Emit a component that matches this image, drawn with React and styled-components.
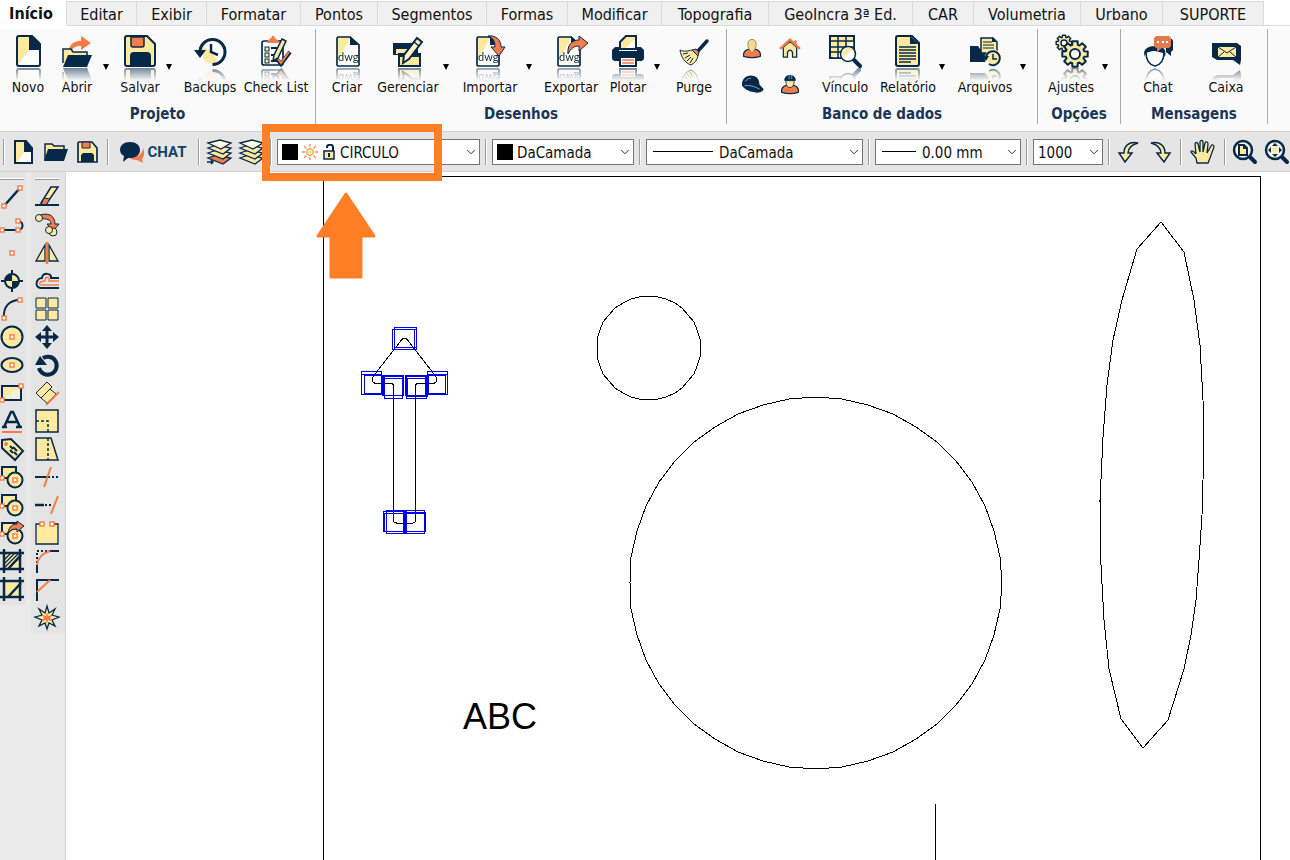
import { ChevronDown } from "lucide-react";
import styled, { createGlobalStyle, css } from "styled-components";

const NAVY = "#06294a";
const CREAM = "#fde9a0";
const ORANGE = "#f47c48";

/* ---------- ribbon icons (32 x 32) ---------- */

const dwgPage = (
  <>
    <path d="M5 1h14l8 9v21H5z" fill="#fffdf5" />
    <path d="M5 1h14L7 24H5z" fill={CREAM} />
    <path d="M18 1l9 9h-9z" fill={NAVY} />
    <path
      d="M6 2h12l9 8v19a1.5 1.5 0 0 1-1 2H6a1.5 1.5 0 0 1-1-2V3z"
      fill="none"
      stroke={NAVY}
      strokeWidth="1.7"
    />
    <text x="6" y="26" fontSize="11" fontFamily="Lato, sans-serif" fill={NAVY}>
      dwg
    </text>
  </>
);

// outline of a cog wheel with eight teeth
const cog = (cx, cy, outer, inner) => {
  const points = [];
  for (let i = 0; i < 8; i++) {
    [
      [-0.3, inner],
      [-0.2, outer],
      [0.2, outer],
      [0.3, inner],
    ].forEach(([shift, r]) => {
      const a = (i * Math.PI) / 4 + shift;
      points.push(`${(cx + r * Math.cos(a)).toFixed(1)},${(cy + r * Math.sin(a)).toFixed(1)}`);
    });
  }
  return points.join(" ");
};

const icons = {
  novo: (
    <>
      <path d="M5 1h23v30H5z" fill={CREAM} />
      <path d="M28 14v17H5L18 14z" fill="#fff" />
      <path d="M17 1h3l8 8v6H17z" fill={NAVY} />
      <path
        d="M7 1h13l8 8v20q0 2-2 2H7q-2 0-2-2V3q0-2 2-2z"
        fill="none"
        stroke={NAVY}
        strokeWidth="2"
      />
      <path d="M22 0h7v8z" fill="#fafafa" />
    </>
  ),
  abrir: (
    <>
      <path
        d="M8 15c1-7 6-9 12-9V1l10 7-10 7v-4c-5 0-7 1-9 4z"
        fill={ORANGE}
      />
      <path d="M2 28V14h8l2 3h14v6" fill={CREAM} stroke={NAVY} strokeWidth="1.5" />
      <path d="M7 20h24l-5 12H2z" fill={NAVY} />
    </>
  ),
  salvar: (
    <>
      <path
        d="M3 1h20l8 8v20q0 2-2 2H3q-2 0-2-2V3q0-2 2-2z"
        fill={CREAM}
        stroke={NAVY}
        strokeWidth="2"
      />
      <path d="M7 2v8q0 2 2 2h9q2 0 2-2V2z" fill={ORANGE} stroke={NAVY} strokeWidth="1.5" />
      <path d="M6 31V21q0-4 4-4h13q4 0 4 4v10z" fill={NAVY} />
    </>
  ),
  backups: (
    <>
      <circle cx="18" cy="17" r="11" fill="#fff" />
      <path d="M7 10L18 17l6 10c-5 3-13 2-15-4z" fill={CREAM} />
      <path
        d="M6 17a12.5 12.5 0 1 1 12.5 12.5"
        fill="none"
        stroke={NAVY}
        strokeWidth="3"
      />
      <path d="M0 15h12l-6 8z" fill={NAVY} />
      <path d="M17 9v8l7 3" fill="none" stroke={NAVY} strokeWidth="2.5" />
    </>
  ),
  checklist: (
    <>
      <rect x="2" y="6" width="21" height="24" rx="2" fill="#fff" stroke={NAVY} strokeWidth="1.7" />
      <path d="M7 8c0-4 4-3 5-7h2c1 4 5 3 5 7z" fill={ORANGE} />
      <rect x="5" y="12" width="4" height="4" fill={CREAM} stroke={NAVY} />
      <rect x="5" y="18" width="4" height="4" fill={CREAM} stroke={NAVY} />
      <rect x="5" y="24" width="4" height="4" fill={CREAM} stroke={NAVY} />
      <path d="M11 13h6M11 20h4M11 26h7" stroke={NAVY} strokeWidth="2" />
      <path d="M22 4l4 2-8 17-5 3 1-6z" fill={CREAM} stroke={NAVY} strokeWidth="1.5" />
      <path d="M17 24l4 5 9-12" fill="none" stroke={NAVY} strokeWidth="4" />
      <path d="M18 24l3 4 8-11" fill="none" stroke={ORANGE} strokeWidth="2" />
    </>
  ),
  criar: <g transform="translate(1 0)">{dwgPage}</g>,
  gerenciar: (
    <>
      <path d="M1 8h25v12H1z" fill={NAVY} />
      <path d="M4 14h13l-5 5H4z" fill={CREAM} />
      <path d="M7 19h21v12H7z" fill={CREAM} stroke={NAVY} strokeWidth="2" />
      <path d="M7 19h21v3H7z" fill={NAVY} />
      <path d="M25 3l5 4-13 17-6 4 1-8z" fill="#fff3c4" stroke={NAVY} strokeWidth="2" />
      <path d="M22 7l5 4" stroke={NAVY} strokeWidth="1.5" />
    </>
  ),
  importar: (
    <>
      <g transform="translate(-2 0)">{dwgPage}</g>
      <path
        d="M14 1c8-1 13 4 13 11h4l-6 9-8-9h4c0-6-2-9-7-11z"
        fill={ORANGE}
        stroke={NAVY}
      />
    </>
  ),
  exportar: (
    <>
      <g transform="translate(-2 0)">{dwgPage}</g>
      <path
        d="M13 19c-1-9 4-14 11-14V1l9 7-9 8v-5c-5 0-8 2-11 8z"
        fill={ORANGE}
        stroke={NAVY}
      />
    </>
  ),
  plotar: (
    <>
      <path d="M8 14V7l6-6h10v13z" fill={CREAM} stroke={NAVY} strokeWidth="2" />
      <path d="M14 13l9-9v9z" fill="#fff" />
      <path d="M3 12h4v4h18v-4h4l3 3v9l-2 2H2l-2-2v-9z" fill={NAVY} />
      <path d="M8 22h16v9H8z" fill="#fff" stroke={NAVY} strokeWidth="2" />
      <path d="M10 25h12M10 28h12" stroke={ORANGE} strokeWidth="1.5" />
    </>
  ),
  purge: (
    <>
      <path d="M29 6L20 16" stroke={NAVY} strokeWidth="3.5" strokeLinecap="round" />
      <path
        d="M2 15c4 2 8 1 12 0l6 6c-1 4-3 7-7 9C7 28 3 22 2 15z"
        fill={CREAM}
        stroke={NAVY}
      />
      <path d="M5 19l5-1M7 23l5-3M9 26l4-4M12 28l3-5" stroke={NAVY} />
      <path d="M14 15l4-1 3 3-1 4z" fill={ORANGE} stroke={NAVY} />
    </>
  ),
  vinculo: (
    <>
      <path d="M1 1h24v22H1z" fill={CREAM} stroke={NAVY} strokeWidth="2" />
      <path d="M25 5v18H3z" fill="#fffbe9" />
      <path
        d="M1 1h24v22H1zM1 6h24M1 12h24M1 17h24M9 1v22M17 1v22"
        fill="none"
        stroke={NAVY}
        strokeWidth="1.5"
      />
      <path d="M25 25l6 6" stroke={NAVY} strokeWidth="4" strokeLinecap="round" />
      <circle cx="19" cy="19" r="7.5" fill="#fff" stroke={NAVY} strokeWidth="1.5" />
      <path d="M14 23a7 7 0 0 1 10-9z" fill={CREAM} />
    </>
  ),
  relatorio: (
    <>
      <path d="M6 1h14l7 7v21q0 2-2 2H6q-2 0-2-2V3q0-2 2-2z" fill={CREAM} stroke={NAVY} strokeWidth="2" />
      <path d="M18 1l9 8h-9z" fill={NAVY} />
      <path d="M7 12h17M7 15h17M7 18h17M7 21h17M7 24h17M7 27h12" stroke={NAVY} strokeWidth="1.3" />
    </>
  ),
  arquivos: (
    <>
      <path d="M1 11h8l2 3h10v13H1z" fill={NAVY} />
      <path d="M12 3h12l4 4v11H12z" fill={CREAM} stroke={NAVY} strokeWidth="1.5" />
      <path d="M14 7h9M14 10h11M14 13h11" stroke={NAVY} />
      <path d="M23 2l5 5h-5z" fill={NAVY} />
      <circle cx="24" cy="23" r="8.5" fill="#fff" />
      <path d="M17 22a7 7 0 1 1 3 7" fill={CREAM} stroke={NAVY} strokeWidth="2" />
      <path d="M13 21h7l-3 5z" fill={NAVY} />
      <path d="M24 19v5h4" fill="none" stroke={NAVY} strokeWidth="1.5" />
    </>
  ),
  ajustes: (
    <g stroke={NAVY} strokeLinejoin="round">
      <polygon points={cog(9, 8, 8, 6)} fill={CREAM} strokeWidth="1.5" />
      <circle cx="9" cy="8" r="3" fill="#fff" strokeWidth="1.5" />
      <polygon points={cog(20, 19, 13, 9.5)} fill={CREAM} strokeWidth="2" />
      <circle cx="20" cy="19" r="5" fill="#fff" strokeWidth="2" />
    </g>
  ),
  chat: (
    <>
      <path d="M23 4h7l1 2v9l-2 2v4l-5-4z" fill={NAVY} />
      <path d="M4 17c0 9 4 13 9 14 5-1 9-5 9-14l-8-3z" fill="#fff" stroke={NAVY} strokeWidth="1.5" />
      <path d="M3 22c0-5 3-6 10-6l8 2 2 4c2-8-2-11-10-11S0 15 3 22z" fill={NAVY} />
      <path d="M14 1h13l2 2v8l-2 2h-7l-5 4v-4h-1l-2-2V3z" fill="#e17b4d" />
      <path d="M15 7h2M20 7h2M24 7h2" stroke="#fff" strokeWidth="2" />
    </>
  ),
  caixa: (
    <>
      <path d="M2 8h25l4 3v14l-1 5-7-5H7l-5-3z" fill={NAVY} />
      <path d="M8 12h18v10H8z" fill={CREAM} />
      <path d="M8 12l9 6 9-6M8 22l6-5M26 22l-6-5" fill="none" stroke={NAVY} />
    </>
  ),
};

/* ---------- small icons of the data group (24 x 24) ---------- */

const smallIcons = {
  pessoa: (
    <>
      <path d="M2 22c-1-7 4-9 10-9s11 2 10 9q-10 3-20 0z" fill={ORANGE} stroke={NAVY} strokeWidth="1.5" />
      <path d="M7 7c0-7 10-7 10 0 0 4-1 6-3 8v2h-4v-2c-2-2-3-4-3-8z" fill="#f5d98b" stroke="#8a7a55" />
    </>
  ),
  casa: (
    <>
      <path d="M17 3h3v5h-3z" fill={ORANGE} />
      <path d="M4 11l8-7 8 7v12h-5v-6q-3-5-6 0v6H4z" fill={CREAM} stroke={NAVY} strokeWidth="1.5" />
      <path d="M0 13L12 2l12 11" fill="none" stroke={ORANGE} strokeWidth="3" />
    </>
  ),
  capacete: (
    <>
      <path d="M0 14C-1 6 6 1 12 2c6 0 9 5 9 11l5 5c-1 4-7 5-11 4C8 21 3 18 0 14z" fill={NAVY} />
      <path d="M3 14c6-1 12 1 18 4M4 9c2-3 4-4 7-4" fill="none" stroke="#9fb4c7" />
    </>
  ),
  operario: (
    <>
      <path d="M2 22c-1-7 4-9 10-9s11 2 10 9q-10 3-20 0z" fill={ORANGE} stroke={NAVY} strokeWidth="1.5" />
      <path d="M7 8h10c0 4-1 6-3 8h-4c-2-2-3-4-3-8z" fill={CREAM} stroke={NAVY} />
      <path d="M5 8c0-9 14-9 14 0z" fill={NAVY} />
      <path d="M11 1v5M14 1v5" stroke="#9fb4c7" />
    </>
  ),
};

/* ---------- tool bar and palette icons (24 x 24) ---------- */

const Knot = ({ x, y }) => (
  <rect x={x - 2} y={y - 2} width="4" height="4" fill="#fff" stroke={ORANGE} strokeWidth="1.4" />
);

const line = { fill: "none", stroke: NAVY, strokeWidth: 2 };

const Layers = ({ last }) => (
  <g stroke={NAVY} strokeWidth="1.3">
    <path d="M1 18l9-3 14 3-8 6z" fill={last} />
    <path d="M1 13l9-3 14 3-8 6z" fill={CREAM} />
    <path d="M1 8l9-3 14 3-8 6z" fill={CREAM} />
    <path d="M1 3l12-3 11 3-10 6z" fill="#fffbe4" />
  </g>
);

const Blocks = () => (
  <>
    <path d="M2 2h14v11H2z" fill={CREAM} stroke={NAVY} strokeWidth="2" />
    <circle cx="15" cy="15" r="7.5" fill={CREAM} stroke={NAVY} strokeWidth="2" />
    <Knot x={15} y={15} />
    <Knot x={2} y={13} />
  </>
);

const Hatch = ({ children }) => (
  <>
    <path d="M3 3h18v18H3z" fill={CREAM} />
    {children}
    <path d="M4 0v24M20 0v24M0 4h24M0 20h24" {...line} strokeWidth="2.5" />
    <path d="M21 6L8 20" {...line} strokeWidth="2.5" />
  </>
);

const tools = {
  novo: (
    <>
      <path d="M3 1h11l6 7v15H3z" fill={CREAM} />
      <path d="M20 11v12H5l8-12z" fill="#fff" />
      <path d="M12 1h2l6 7v4h-8z" fill={NAVY} />
      <path d="M3 1h11l6 7v15H3z" {...line} />
    </>
  ),
  abrir: (
    <>
      <path d="M1 20V4h7l2 2h10v5" fill={CREAM} stroke={NAVY} strokeWidth="1.5" />
      <path d="M4 9h20l-4 12H0z" fill={NAVY} />
    </>
  ),
  salvar: (
    <>
      <path d="M3 2h13l5 6v14H2V3z" fill={CREAM} stroke={NAVY} strokeWidth="1.7" />
      <path d="M6 2h8v6H6z" fill={ORANGE} stroke={NAVY} />
      <path d="M5 22v-7l2-2h9l2 2v7z" fill={NAVY} />
    </>
  ),
  conversa: (
    <>
      <path d="M23 8c2 5 1 9-1 11l1 4-6-3c-4 0-7-1-8-3 8 1 13-2 14-9z" fill={ORANGE} />
      <path d="M10 2c6 0 10 3 10 8s-4 8-10 8l-2 0-5 4 1-6c-2-1-4-3-4-6 0-5 4-8 10-8z" fill={NAVY} />
    </>
  ),
  camadaAtual: (
    <>
      <Layers last={ORANGE} />
      <path d="M0 22h6M4 20l2 2-2 2" fill="none" stroke={NAVY} strokeWidth="1.5" />
    </>
  ),
  camadas: <Layers last={CREAM} />,
  desfazer: (
    <path d="M21 3C12 1 7 6 7 13H2l6 9 7-9h-4c0-5 3-8 10-10z" fill={CREAM} stroke={NAVY} strokeWidth="1.5" />
  ),
  refazer: (
    <path d="M2 3c9-2 14 3 14 10h5l-6 9-7-9h4c0-5-3-8-10-10z" fill={CREAM} stroke={NAVY} strokeWidth="1.5" />
  ),
  mao: (
    <path
      d="M6 23l-1-5-5-6c0-2 3-1 5 2L4 4c0-2 3-2 3 0l2 8V2c0-2 3-2 3 0v10l2-9c1-2 3-1 3 1l-1 9 4-7c1-2 3-1 3 1l-4 11-2 5z"
      fill={CREAM}
      stroke={NAVY}
      strokeWidth="1.3"
    />
  ),
  zoomPagina: (
    <>
      <path d="M17 17l5 5" stroke={NAVY} strokeWidth="4" strokeLinecap="round" />
      <circle cx="10" cy="10" r="9" fill="#f5f5ee" stroke={NAVY} strokeWidth="2.5" />
      <path d="M6 5h5l3 3v7H6z" fill={CREAM} stroke={NAVY} strokeWidth="2" />
      <path d="M10 5l4 4h-4z" fill={NAVY} />
    </>
  ),
  zoomTudo: (
    <>
      <path d="M17 17l5 5" stroke={NAVY} strokeWidth="4" strokeLinecap="round" />
      <circle cx="10" cy="10" r="9" fill="#f5f5ee" stroke={NAVY} strokeWidth="2.5" />
      <circle cx="10" cy="10" r="3" fill={CREAM} />
      <path d="M10 3l3 3H7zM10 17l3-3H7zM3 10l3-3v6zM17 10l-3-3v6z" fill={NAVY} />
    </>
  ),
  linha: (
    <>
      <path d="M4 21L20 3" {...line} strokeWidth="2.5" />
      <Knot x={4} y={21} />
      <Knot x={20} y={3} />
    </>
  ),
  polilinha: (
    <>
      <path d="M2 17h16c6 0 6-9 0-9" {...line} />
      <Knot x={2} y={17} />
      <Knot x={18} y={17} />
      <Knot x={18} y={8} />
    </>
  ),
  ponto: <Knot x={12} y={12} />,
  alvo: (
    <>
      <circle cx="12" cy="12" r="7" fill={CREAM} stroke={NAVY} strokeWidth="2" />
      <path d="M12 5a7 7 0 0 0-7 7h7zM12 19a7 7 0 0 0 7-7h-7z" fill={NAVY} />
      <path d="M12 1v5M12 18v5M1 12h5M18 12h5" {...line} />
    </>
  ),
  arco: (
    <>
      <path d="M4 21C3 10 9 3 20 3" {...line} />
      <Knot x={4} y={21} />
      <Knot x={20} y={3} />
    </>
  ),
  circulo: (
    <>
      <circle cx="12" cy="12" r="10.5" fill={CREAM} stroke={NAVY} strokeWidth="2" />
      <Knot x={12} y={12} />
    </>
  ),
  elipse: (
    <>
      <ellipse cx="12" cy="12" rx="10.5" ry="7" fill={CREAM} stroke={NAVY} strokeWidth="2" />
      <Knot x={12} y={12} />
    </>
  ),
  retangulo: (
    <>
      <path d="M2 5h19v14H2z" fill={CREAM} />
      <path d="M21 5v14H2z" fill="#f4f1e2" />
      <path d="M2 5h19v14H2z" {...line} />
      <Knot x={21} y={5} />
      <Knot x={2} y={19} />
    </>
  ),
  texto: (
    <>
      <path d="M4 18L11 3h2l7 15M7 13h10M2 18h5M16 18h6" {...line} strokeWidth="2.5" />
      <path d="M2 23h20" stroke={ORANGE} strokeWidth="2" />
    </>
  ),
  etiqueta: (
    <>
      <path d="M2 3l9-1 12 12-8 9L2 11z" fill={CREAM} stroke={NAVY} strokeWidth="2" />
      <circle cx="6" cy="7" r="2" fill={ORANGE} />
      <path d="M10 9l3 3M10 13l3 3M14 15l3 3M13 10l4 4" {...line} />
    </>
  ),
  bloco: <Blocks />,
  blocoNovo: <Blocks />,
  blocoMover: (
    <>
      <Blocks />
      <path d="M8 12c1-7 5-9 9-9V0l7 5-7 6V8c-4 0-7 1-9 4z" fill={ORANGE} stroke={NAVY} />
    </>
  ),
  hachura: (
    <Hatch>
      <path d="M4 11l7-7M4 15L15 4M4 19L19 4M8 20L20 8" fill="none" stroke={NAVY} strokeWidth="1.3" />
    </Hatch>
  ),
  contorno: <Hatch />,
  apagar: (
    <>
      <path d="M16 2h7L12 18H6z" fill={CREAM} stroke={NAVY} strokeWidth="1.5" />
      <path d="M9 13l6 1-4 6H6z" fill={ORANGE} stroke={NAVY} />
      <path d="M0 20h24" {...line} />
    </>
  ),
  copiar: (
    <>
      <path d="M5 2c10-3 15 2 15 9h4l-6 7-6-7h4c0-4-4-6-11-5z" fill={ORANGE} stroke={NAVY} />
      <circle cx="4" cy="5" r="3.5" fill={CREAM} stroke={NAVY} />
      <circle cx="18" cy="19" r="4" fill={CREAM} stroke={NAVY} />
      <circle cx="14" cy="17" r="3.5" fill={CREAM} stroke={NAVY} />
    </>
  ),
  espelhar: (
    <>
      <path d="M10 4v16H1zM14 4v16h9z" fill={CREAM} stroke={NAVY} strokeWidth="1.3" />
      <path d="M12 1v22" stroke={ORANGE} strokeWidth="2.5" />
    </>
  ),
  paralela: (
    <>
      <path d="M24 9h-8c1-5-8-6-9 0-6 0-8 10-1 10h18" {...line} />
      <path d="M24 12H14c1-5-4-5-4 0-6 0-7 4-3 4h17" fill="none" stroke={ORANGE} strokeWidth="1.3" />
    </>
  ),
  matriz: (
    <path
      d="M1 1h10v10H1zM13 1h10v10H13zM1 13h10v10H1zM13 13h10v10H13z"
      fill={CREAM}
      stroke={NAVY}
    />
  ),
  mover: (
    <>
      <path d="M12 3v18M3 12h18" {...line} strokeWidth="3" />
      <path d="M12 0l5 6H7zM12 24l5-6H7zM0 12l6-5v10zM24 12l-6-5v10z" fill={NAVY} />
    </>
  ),
  girar: (
    <>
      <path d="M8 5a9 9 0 1 1-4 10" {...line} strokeWidth="4" />
      <path d="M0 12L5 3l7 9z" fill={NAVY} />
    </>
  ),
  alinhar: (
    <>
      <path d="M1 12L12 1l5 5L6 17zM6 17l9-9 6 5-9 9z" fill={CREAM} stroke={NAVY} />
      <path d="M24 11L11 24" stroke={ORANGE} strokeWidth="2" />
    </>
  ),
  escala: (
    <>
      <path d="M1 1h22v22H1z" fill={CREAM} stroke={NAVY} strokeWidth="1.5" />
      <path d="M1 12h12v11" fill="none" stroke={NAVY} strokeWidth="1.5" strokeDasharray="3 2" />
    </>
  ),
  esticar: (
    <>
      <path d="M1 1h15l7 22H1z" fill={CREAM} stroke={NAVY} strokeWidth="1.5" />
      <path d="M13 1v22" stroke={NAVY} strokeWidth="1.5" strokeDasharray="3 2" />
    </>
  ),
  aparar: (
    <>
      <path d="M0 12h12" {...line} />
      <path d="M13 12h11" {...line} strokeDasharray="2 2" />
      <path d="M16 2L9 22" stroke={ORANGE} strokeWidth="2" />
    </>
  ),
  estender: (
    <>
      <path d="M0 12h9" {...line} strokeWidth="2.5" />
      <path d="M10 12h8" {...line} strokeDasharray="2 2" />
      <path d="M23 3l-7 18" stroke={ORANGE} strokeWidth="2" />
    </>
  ),
  quebrar: (
    <>
      <path d="M1 3h22v20H1z" fill={CREAM} stroke={NAVY} strokeWidth="1.3" />
      <path d="M8 3h8" stroke="#e5e5e5" strokeWidth="2" />
      <Knot x={7} y={3} />
      <Knot x={17} y={3} />
    </>
  ),
  arredondar: (
    <>
      <path d="M2 24v-8M14 2h10" {...line} />
      <path d="M2 14V2h10" {...line} strokeDasharray="2 2" />
      <path d="M2 16C3 8 8 4 15 2" fill="none" stroke={ORANGE} strokeWidth="2" />
    </>
  ),
  chanfrar: (
    <>
      <path d="M2 24V3h22" {...line} />
      <path d="M2 15L15 3" stroke={ORANGE} strokeWidth="2" />
    </>
  ),
  explodir: (
    <>
      <path
        d="M12 1l2 7 6-4-3 6 7 2-7 3 3 6-6-3-2 6-2-6-6 3 3-6-7-3 7-2-3-6 6 4z"
        fill={CREAM}
        stroke={NAVY}
        strokeWidth="1.3"
      />
      <path d="M12 7l1 4 4-1-2 3 2 3-4-1-1 4-1-4-4 1 2-3-2-3 4 1z" fill={ORANGE} />
    </>
  ),
};

/* ---------- data ---------- */

const tabs = [
  ["Início", 67],
  ["Editar", 70],
  ["Exibir", 70],
  ["Formatar", 94],
  ["Pontos", 77],
  ["Segmentos", 109],
  ["Formas", 81],
  ["Modificar", 94],
  ["Topografia", 107],
  ["GeoIncra 3ª Ed.", 144],
  ["CAR", 61],
  ["Volumetria", 107],
  ["Urbano", 82],
  ["SUPORTE", 101],
];

const groups = [
  {
    title: "Projeto",
    width: 316,
    items: [
      { label: "Novo", icon: "novo", width: 44 },
      { label: "Abrir", icon: "abrir", width: 44, menu: true },
      { label: "Salvar", icon: "salvar", width: 44, menu: true },
      { label: "Backups", icon: "backups", width: 58 },
      { label: "Check List", icon: "checklist", width: 64 },
    ],
  },
  {
    title: "Desenhos",
    width: 411,
    items: [
      { label: "Criar", icon: "criar", width: 50 },
      { label: "Gerenciar", icon: "gerenciar", width: 62, menu: true },
      { label: "Importar", icon: "importar", width: 64, menu: true },
      { label: "Exportar", icon: "exportar", width: 60 },
      { label: "Plotar", icon: "plotar", width: 44, menu: true },
      { label: "Purge", icon: "purge", width: 50 },
    ],
  },
  {
    title: "Banco de dados",
    width: 311,
    small: ["pessoa", "casa", "capacete", "operario"],
    items: [
      { label: "Vínculo", icon: "vinculo", width: 62 },
      { label: "Relatório", icon: "relatorio", width: 54, menu: true },
      { label: "Arquivos", icon: "arquivos", width: 62, menu: true },
    ],
  },
  {
    title: "Opções",
    width: 83,
    items: [{ label: "Ajustes", icon: "ajustes", width: 54, menu: true }],
  },
  {
    title: "Mensagens",
    width: 147,
    items: [
      { label: "Chat", icon: "chat", width: 62 },
      { label: "Caixa", icon: "caixa", width: 64 },
    ],
  },
];

const drawTools = [
  "linha",
  "polilinha",
  "ponto",
  "alvo",
  "arco",
  "circulo",
  "elipse",
  "retangulo",
  "texto",
  "etiqueta",
  "bloco",
  "blocoNovo",
  "blocoMover",
  "hachura",
  "contorno",
];

const editTools = [
  "apagar",
  "copiar",
  "espelhar",
  "paralela",
  "matriz",
  "mover",
  "girar",
  "alinhar",
  "escala",
  "esticar",
  "aparar",
  "estender",
  "quebrar",
  "arredondar",
  "chanfrar",
  "explodir",
];

// circles are shown as polygons, like the CAD engine does
const polygon = (cx, cy, r, sides) =>
  Array.from({ length: sides }, (_, i) => {
    const a = (i * 2 * Math.PI) / sides;
    return `${Math.round(cx + r * Math.cos(a))},${Math.round(cy + r * Math.sin(a))}`;
  }).join(" ");

const grips = [
  [392, 329, 22, 20],
  [394, 327, 22, 20],
  [394, 329, 22, 20],
  [361, 371, 20, 23],
  [361, 374, 20, 20],
  [364, 375, 20, 18],
  [382, 376, 20, 19],
  [383, 375, 20, 20],
  [384, 378, 18, 20],
  [405, 375, 20, 20],
  [407, 378, 20, 18],
  [406, 376, 20, 22],
  [427, 371, 20, 23],
  [427, 374, 20, 20],
  [425, 375, 20, 18],
  [383, 511, 21, 20],
  [384, 513, 20, 18],
  [386, 510, 18, 23],
  [404, 510, 20, 23],
  [405, 513, 20, 18],
  [404, 512, 21, 19],
];

// places where neighbouring grips merge into a solid bar
const gripBars = [
  [381, 375, 4, 20],
  [425, 375, 4, 20],
  [403, 511, 4, 22],
];

/* ---------- components ---------- */

function Icon({ art, size = 24 }) {
  return (
    <svg
      width={size}
      height={size}
      viewBox={size === 32 ? "0 0 32 32" : "0 0 24 24"}
      overflow="visible"
      aria-hidden="true"
    >
      {art}
    </svg>
  );
}

function Palette({ names, label, wide }) {
  return (
    <Strip aria-label={label} $wide={wide}>
      <Handle />
      {names.map((name) => (
        <Tool key={name} aria-label={name}>
          <Icon art={tools[name]} />
        </Tool>
      ))}
    </Strip>
  );
}

function ToolButtons({ names }) {
  return names.map((name) => (
    <BarButton key={name} aria-label={name} $wide={name === "mao"}>
      <Icon art={tools[name]} />
    </BarButton>
  ));
}

function Combo({ label, width, value, children, callout }) {
  return (
    <ComboBox $width={width}>
      {children}
      <select aria-label={label} defaultValue={value}>
        <option>{value}</option>
      </select>
      <ChevronDown size={14} strokeWidth={1.5} />
      {callout}
    </ComboBox>
  );
}

function App() {
  return (
    <Page>
      <GlobalStyle />
      <Tabs>
        {tabs.map(([name, width], i) => (
          <Tab key={name} $width={width} $active={i === 0}>
            {name}
          </Tab>
        ))}
        <TabsRest />
      </Tabs>

      <Ribbon>
        {groups.map((group) => (
          <Group key={group.title} $width={group.width}>
            <GroupItems>
              {group.small && (
                <SmallGrid>
                  {group.small.map((name) => (
                    <SmallButton key={name} aria-label={name}>
                      <Icon art={smallIcons[name]} size={20} />
                    </SmallButton>
                  ))}
                </SmallGrid>
              )}
              {group.items.map((item) => (
                <ItemWrap key={item.label}>
                  <RibbonButton $width={item.width}>
                    <Mirror>
                      <Icon art={icons[item.icon]} size={32} />
                    </Mirror>
                    <span>{item.label}</span>
                  </RibbonButton>
                  {item.menu && <MenuArrow aria-label={`Mais ${item.label}`} />}
                </ItemWrap>
              ))}
            </GroupItems>
            <GroupTitle>{group.title}</GroupTitle>
          </Group>
        ))}
      </Ribbon>

      <Toolbar>
        <Separator />
        <ToolButtons names={["novo", "abrir", "salvar"]} />
        <Separator />
        <ChatButton>
          <Icon art={tools.conversa} />
          CHAT
        </ChatButton>
        <Separator />
        <ToolButtons names={["camadaAtual", "camadas"]} />
        <Separator />
        <Combo
          label="Camada"
          width={203}
          value="CIRCULO"
          callout={
            <Callout>
              <svg width="60" height="90" viewBox="0 0 60 90" aria-hidden="true">
                <path
                  d="M30 3L58 45H2zM15 45h30v41H15z"
                  fill="#ff7f27"
                  stroke="#ff7f27"
                  strokeWidth="3"
                  strokeLinejoin="round"
                />
              </svg>
            </Callout>
          }
        >
          <Swatch />
          <svg width="16" height="16" viewBox="0 0 16 16" aria-hidden="true">
            <path
              d="M8 0v16M0 8h16M2 2l12 12M14 2L2 14"
              stroke="#f0905c"
              strokeWidth="1.3"
            />
            <circle cx="8" cy="8" r="5" fill="#fff" />
            <circle cx="8" cy="8" r="3.5" fill={CREAM} stroke="#f0905c" />
          </svg>
          <svg width="14" height="16" viewBox="0 0 14 16" aria-hidden="true">
            <path d="M5 4V3c0-3 6-3 6 0v4" fill="none" stroke={NAVY} strokeWidth="2" />
            <path d="M2 7h10v8H2z" fill={CREAM} stroke={NAVY} strokeWidth="1.5" />
            <path d="M7 9v4" stroke={NAVY} strokeWidth="2" />
          </svg>
        </Combo>
        <Separator />
        <Combo label="Cor" width={142} value="DaCamada">
          <Swatch />
        </Combo>
        <Separator />
        <Combo label="Tipo de linha" width={217} value="DaCamada">
          <Stroke $width={60} />
        </Combo>
        <Separator />
        <Combo label="Espessura" width={146} value="0.00 mm">
          <Stroke $width={34} />
        </Combo>
        <Separator />
        <Combo label="Escala" width={70} value="1000" />
        <Separator />
        <ToolButtons names={["desfazer", "refazer"]} />
        <Separator />
        <ToolButtons names={["mao"]} />
        <Separator />
        <ToolButtons names={["zoomPagina", "zoomTudo"]} />
      </Toolbar>

      <Workspace>
        <Sidebar>
          <Palette names={drawTools} label="Desenhar" />
          <Palette names={editTools} label="Modificar" wide />
        </Sidebar>
        <Canvas>
          <svg width="1224" height="688" viewBox="66 172 1224 688">
            <g fill="none" stroke="#000" shapeRendering="crispEdges">
              <path d="M323.5 900V176.5H1260.5V900M935.5 804V900" />
              <polygon points={polygon(648.5, 348, 52, 36)} />
              <polygon points={polygon(815.5, 583, 186, 44)} />
              <polygon points="1161,222 1184,252 1194,300 1200,345 1203,400 1204,440 1203,480 1202,515 1199,560 1196,600 1191,635 1184,669 1168,720 1143,748 1121,719 1109,669 1104,620 1101,565 1100,500 1103,437 1107,385 1113,340 1122,300 1137,249" />
              <path d="M393.5 514V386q0-3-4-3h-15q-4-2-1-7l28-36q3-4 6 0l28 36q3 5-1 7h-15q-4 0-4 3v135q0 2-3 2h-16q-3 0-3-2z" />
              <g stroke="#0000e6">
                {grips.map(([x, y, w, h], i) => (
                  <rect key={i} x={x + 0.5} y={y + 0.5} width={w} height={h} />
                ))}
              </g>
              <g stroke="none" fill="#0000e6">
                {gripBars.map(([x, y, w, h]) => (
                  <rect key={x} x={x} y={y} width={w} height={h} />
                ))}
              </g>
            </g>
            <text x="463" y="729" fontSize="36" fontFamily="'Liberation Sans', Arial, sans-serif">
              ABC
            </text>
          </svg>
        </Canvas>
      </Workspace>
    </Page>
  );
}

/* ---------- styles ---------- */

const GlobalStyle = createGlobalStyle`
  * {
    box-sizing: border-box;
  }
  body {
    margin: 0;
    color: #111;
    font-family: "DejaVu Sans Condensed", "Noto Sans", sans-serif;
    font-size: 16px;
  }
  button,
  select {
    margin: 0;
    padding: 0;
    border: 0;
    background: none;
    color: inherit;
    font: inherit;
  }
`;

const center = css`
  display: flex;
  align-items: center;
  justify-content: center;
`;

const Page = styled.div`
  display: flex;
  flex-direction: column;
  height: 100vh;
  overflow: hidden;
  background: #fff;
`;

const Tabs = styled.nav`
  display: flex;
  flex: none;
  height: 29px;
  padding-bottom: 3px;
`;

const Tab = styled.button`
  flex: none;
  width: ${(props) => props.$width}px;
  margin-top: 1px;
  padding-top: 2px;
  border: 1px solid #dadada;
  border-left: 0;
  background: #f0f0f0;
  line-height: 21px;
  white-space: nowrap;
  ${(props) =>
    props.$active &&
    css`
      margin-top: 0;
      padding: 0 4px 0 0;
      border-color: transparent #dadada transparent transparent;
      background: #fff;
      font-weight: bold;
    `}
`;

const TabsRest = styled.span`
  flex: 1;
  border-bottom: 1px solid #dadada;
`;

const Ribbon = styled.header`
  display: flex;
  flex: none;
  height: 102px;
  padding-bottom: 7px;
  background: #fafafa;
`;

const Group = styled.section`
  display: flex;
  flex: none;
  flex-direction: column;
  width: ${(props) => props.$width}px;
  padding-left: 6px;
  border-right: 1px solid #a8a8a8;
`;

const GroupItems = styled.div`
  display: flex;
  flex: 1;
  gap: 5px;
  padding-top: 6px;
`;

const GroupTitle = styled.h2`
  margin: 0;
  padding-right: 6px;
  color: #1c3557;
  font-size: 15px;
  line-height: 20px;
  text-align: center;
  white-space: nowrap;
`;

const ItemWrap = styled.div`
  display: flex;
`;

const RibbonButton = styled.button`
  display: flex;
  flex-direction: column;
  align-items: center;
  width: ${(props) => props.$width}px;
  font-size: 14px;
  line-height: 16px;
  white-space: nowrap;

  span:last-child {
    position: relative;
    margin-top: 12px;
  }
`;

const Mirror = styled.span`
  height: 32px;
  -webkit-box-reflect: below 1px
    linear-gradient(transparent 60%, rgba(0, 0, 0, 0.55));

  svg {
    display: block;
  }
`;

const MenuArrow = styled.button`
  width: 14px;
  height: 64px;
  ${center}

  &::after {
    content: "";
    border: 3px solid transparent;
    border-top: 6px solid #000;
    border-bottom: 0;
  }
`;

const SmallGrid = styled.div`
  display: grid;
  grid-template-columns: 38px 38px;
  grid-auto-rows: 36px;
  margin-top: -5px;
`;

const SmallButton = styled.button`
  ${center}
`;

const Toolbar = styled.div`
  display: flex;
  flex: none;
  align-items: center;
  height: 41px;
  border-top: 1px solid #d2d2d2;
  border-bottom: 1px solid #d2d2d2;
  background: #e5e5e5;
`;

const Separator = styled.span`
  flex: none;
  width: 2px;
  height: 26px;
  margin: 0 3px;
  border-left: 1px solid #9c9c9c;
  border-right: 1px solid #fff;
`;

const BarButton = styled.button`
  flex: none;
  width: ${(props) => (props.$wide ? 36 : 32)}px;
  height: 32px;
  ${center}
`;

const ChatButton = styled.button`
  flex: none;
  gap: 3px;
  width: 83px;
  color: #124365;
  font-family: Roboto, sans-serif;
  font-size: 15px;
  font-weight: bold;
  ${center}
`;

const ComboBox = styled.div`
  display: flex;
  position: relative;
  flex: none;
  align-items: center;
  gap: 4px;
  width: ${(props) => props.$width}px;
  height: 26px;
  margin: 0 2px;
  padding: 0 1px 0 4px;
  border: 1px solid #767676;
  background: #fff;

  select {
    flex: 1;
    min-width: 0;
    padding-top: 2px;
    appearance: none;
    outline: none;
    font-size: 15px;
  }
  > svg {
    flex: none;
  }
`;

const Swatch = styled.span`
  flex: none;
  width: 16px;
  height: 16px;
  background: #000;
`;

const Stroke = styled.span`
  width: ${(props) => props.$width}px;
  height: 1px;
  margin: 0 2px;
  background: #000;
`;

const Callout = styled.div`
  position: absolute;
  z-index: 2;
  top: -16px;
  left: -16px;
  width: 180px;
  height: 57px;
  border: 8px solid #ff7f27;
  pointer-events: none;

  svg {
    position: absolute;
    top: 59px;
    left: 46px;
  }
`;

const Workspace = styled.div`
  display: flex;
  flex: 1;
  min-height: 0;
`;

const Sidebar = styled.aside`
  display: flex;
  flex: none;
  align-items: flex-start;
  gap: 5px;
  width: 66px;
  border-right: 1px solid #d2d2d2;
  background: #eaeaea;
`;

const Strip = styled.div`
  display: flex;
  flex-direction: column;
  align-items: center;
  width: ${(props) => (props.$wide ? 34 : 26)}px;
  padding: 6px 2px 2px 0;
  background: #e4e4e4;
`;

const Handle = styled.span`
  width: 24px;
  height: 2px;
  margin-bottom: 3px;
  border-top: 1px solid #fff;
  border-bottom: 1px solid #9c9c9c;
`;

const Tool = styled.button`
  width: 24px;
  height: 28px;
  ${center}
`;

const Canvas = styled.main`
  flex: 1;
  min-width: 0;
  overflow: hidden;
  background: #fff;

  svg {
    display: block;
  }
`;

export default App;
